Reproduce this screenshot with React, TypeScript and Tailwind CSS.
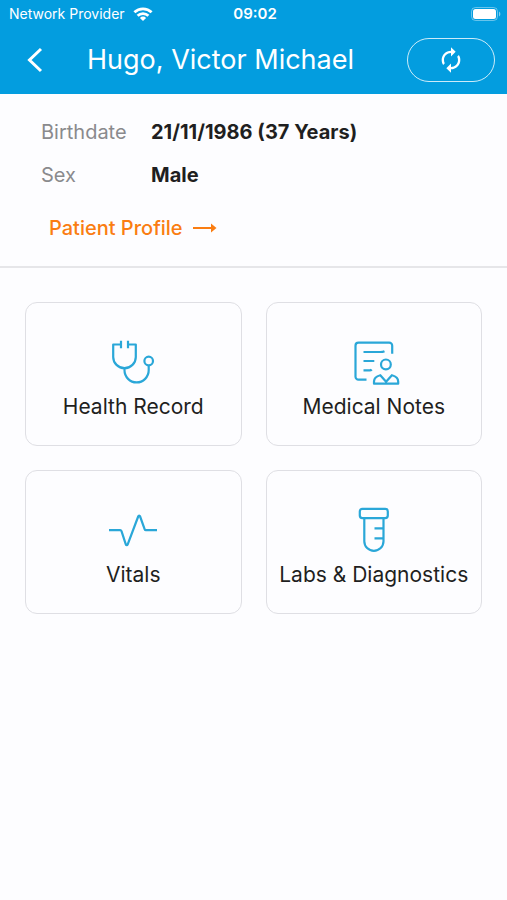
import type { ReactNode } from 'react';
import { MdAutorenew } from 'react-icons/md';

type Tile = {
  label: string;
  icon: ReactNode;
};

const details = [
  { label: 'Birthdate', value: '21/11/1986 (37 Years)' },
  { label: 'Sex', value: 'Male' },
];

const TileIcon = ({ children }: { children: ReactNode }) => (
  <svg
    viewBox="0 0 48 48"
    className="size-12 overflow-visible"
    fill="none"
    stroke="#2aa7d8"
    strokeWidth="2.2"
    strokeLinejoin="round"
    aria-hidden="true"
  >
    { children }
  </svg>
);

const tiles: Tile[] = [
  {
    label: 'Health Record',
    icon: (
      <TileIcon>
        <path d="M12 1.8v7.4M19 1.8v7.4M12 5.5H4.2v12.4a11.3 11.3 0 0 0 22.6 0V5.5H19" />
        <path d="M15.5 29.2v2.1a12.1 12.1 0 0 0 24.2 0v-5" />
        <circle cx="39.7" cy="22" r="4.3" />
      </TileIcon>
    ),
  },
  {
    label: 'Medical Notes',
    icon: (
      <TileIcon>
        <path d="M16.5 40.7h-8a3 3 0 0 1-3-3v-31a3 3 0 0 1 3-3h30.7a3 3 0 0 1 3 3v8" />
        <path d="M13.5 13h16.8c1.8 0 3-.2 4.2-.8M13.5 22h10.8M13.5 31.3h6.2c1 0 1.6-.3 2-.8" />
        <circle cx="35.9" cy="25.4" r="4.9" />
        <path d="M30.3 36.2c-4 1-6.3 3.2-6.3 6.3v2.2h24.2v-2.2c0-3.1-2.3-5.3-6.3-6.3l-5.8 6.5z" />
      </TileIcon>
    ),
  },
  {
    label: 'Vitals',
    icon: (
      <TileIcon>
        <path d="M0 23.2h11.2c.7 0 1 .2 1.3.9l4.3 13.3c.4 1.1 1.5 1.1 1.9 0L29.2 9.5c.4-1.1 1.5-1.1 1.9 0l4.6 12.8c.2.6.6.9 1.2.9H48" />
      </TileIcon>
    ),
  },
  {
    label: 'Labs & Diagnostics',
    icon: (
      <TileIcon>
        <rect x="9.8" y="1.9" width="28" height="9.2" rx="2.5" />
        <path d="M14.3 11.1v23.2a9.6 9.6 0 0 0 19.2 0V11.1M24.5 21.3h9M24.5 31.3h9" />
      </TileIcon>
    ),
  },
];

const StatusBar = () => (
  <div className="grid h-7 grid-cols-3 items-center pr-1.5 pl-[9px] text-[14px] leading-5">
    <div className="flex items-center gap-2 whitespace-nowrap">
      <span>Network Provider</span>
      <svg viewBox="0 0 20 14" className="h-3.5 w-5 shrink-0" fill="none" stroke="white" strokeWidth="2.8" aria-hidden="true">
        <path d="M1.4 5.3a12.4 12.4 0 0 1 17.2 0M4.6 8.8a7.8 7.8 0 0 1 10.8 0" />
        <path d="M10 14 6.9 10.9a4.4 4.4 0 0 1 6.2 0z" fill="white" stroke="none" />
      </svg>
    </div>
    <time className="text-center text-[15px] font-semibold">09:02</time>
    <svg viewBox="0 0 30 14" className="h-3.5 w-[30px] justify-self-end" fill="none" aria-hidden="true">
      <rect x=".5" y=".5" width="26" height="13" rx="4" stroke="white" strokeOpacity=".4" />
      <rect x="2" y="2" width="23" height="10" rx="2.5" fill="white" />
      <path d="M28 4.5c1.8.8 1.8 4.2 0 5z" fill="white" fillOpacity=".5" />
    </svg>
  </div>
);

const App = () => {
  return (
    <div className="min-h-screen bg-[#fdfdff] font-['Inter','Liberation_Sans',sans-serif] text-[#1f1f21]">
      <header className="bg-[#039ddf] text-white">
        <StatusBar />
        <div className="flex h-[66px] items-center pr-3 pb-0.5 pl-[21px]">
          <button type="button" aria-label="Back" className="mr-[38px] flex size-7 shrink-0 items-center justify-center">
            <svg viewBox="0 0 28 28" className="size-7" fill="none" stroke="white" strokeWidth="3" aria-hidden="true">
              <path d="M20 3 8.5 14 20 25" />
            </svg>
          </button>
          <h1 className="flex-1 text-[27px] leading-10 whitespace-nowrap">Hugo, Victor Michael</h1>
          <button
            type="button"
            aria-label="Refresh"
            className="flex h-11 w-[88px] shrink-0 items-center justify-center rounded-full border border-white/80"
          >
            <MdAutorenew className="size-7" />
          </button>
        </div>
      </header>

      <main>
        <section className="border-b-2 border-[#e6e6e9] px-[41px] py-6">
          <dl className="flex flex-col gap-[15px] text-[20px] leading-7">
            { details.map(({ label, value }) => (
              <div key={ label } className="flex">
                <dt className="w-[110px] text-[#8a8a8d]">{ label }</dt>
                <dd className="font-bold">{ value }</dd>
              </div>
            )) }
          </dl>
          <a href="#profile" className="mt-[25px] ml-2 flex w-fit items-center gap-2.5 text-[20px] leading-7 font-medium text-[#fa7d12]">
            Patient Profile
            <svg viewBox="0 0 24 12" className="h-3 w-6" fill="none" aria-hidden="true">
              <path d="M0 6h19" stroke="currentColor" strokeWidth="2" />
              <path d="M18 1.5 23.5 6 18 10.5z" fill="currentColor" />
            </svg>
          </a>
        </section>

        <nav className="grid grid-cols-2 gap-6 px-[25px] pt-[34px]">
          { tiles.map(({ label, icon }) => (
            <button
              key={ label }
              type="button"
              className="flex h-36 flex-col items-center justify-center gap-1.5 rounded-xl border border-[#dfdfe4] pt-3 text-[21px] leading-7 whitespace-nowrap"
            >
              { icon }
              { label }
            </button>
          )) }
        </nav>
      </main>
    </div>
  );
};

export default App;
